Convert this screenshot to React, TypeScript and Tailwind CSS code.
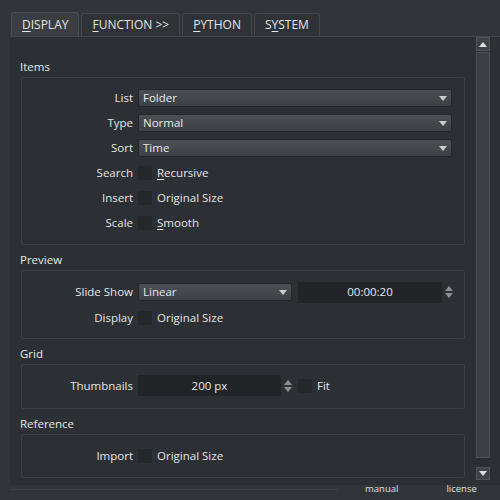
import React from 'react';

const font = { fontFamily: '"Open Sans", "Noto Sans", sans-serif' };

const Tab = ({ mn, rest, pre = '', active = false }: { mn: string; rest: string; pre?: string; active?: boolean }) => (
  <div
    className={`px-[10px] flex items-center rounded-t-[3px] border border-b-0 text-[12px] text-[#e4e4e4] ${
      active ? 'bg-[#3a3e43] border-[#4a4e53] h-[24px]' : 'bg-[#2f3338] border-[#43474c] h-[23px]'
    }`}
  >
    {pre}
    <span className="underline underline-offset-2">{mn}</span>
    {rest}
  </div>
);

const Arrow = ({ up = false, color = '#c9cbcd' }: { up?: boolean; color?: string }) => (
  <svg width="8" height="5" viewBox="0 0 8 5">
    <path d={up ? 'M0 5 L4 0 L8 5 Z' : 'M0 0 L8 0 L4 5 Z'} fill={color} />
  </svg>
);

const Combo = ({ value, w }: { value: string; w: string }) => (
  <div className={`${w} h-[18px] rounded-[2px] border border-[#25282b] bg-gradient-to-b from-[#4b4f54] to-[#3d4146] flex items-center justify-between pl-[4px] pr-[4px] text-[#e8e8e8]`}>
    <span>{value}</span>
    <Arrow />
  </div>
);

const Check = () => <div className="w-[14px] h-[14px] bg-[#25282b]" />;

const Spin = ({ value, w }: { value: string; w: string }) => (
  <div className="flex items-center">
    <div className={`${w} h-[21px] bg-[#222528] flex items-center justify-center text-[#e8e8e8]`}>{value}</div>
    <div className="flex flex-col gap-[2px] ml-[3px]">
      <Arrow up color="#8d9094" />
      <Arrow color="#8d9094" />
    </div>
  </div>
);

const Row = ({ label, children, h = 'h-[18px]' }: { label: string; children: React.ReactNode; h?: string }) => (
  <div className={`flex items-center ${h}`}>
    <div className="w-[116px] text-right pr-[5px] text-[#e4e4e4]">{label}</div>
    {children}
  </div>
);

const CheckRow = ({ label, mn, rest }: { label: string; mn?: string; rest: string }) => (
  <Row label={label}>
    <div className="flex items-center gap-[5px] text-[#e4e4e4]">
      <Check />
      <span>
        {mn && <span className="underline underline-offset-2">{mn}</span>}
        {rest}
      </span>
    </div>
  </Row>
);

const Group = ({ title, children, cls }: { title: string; children: React.ReactNode; cls: string }) => (
  <div className="flex flex-col">
    <div className="h-[18px] leading-[18px] pl-[10px] text-[#e6e6e6]">{title}</div>
    <div className={`ml-[11px] mt-[1px] border border-[#3b3f44] rounded-[2px] flex flex-col ${cls}`}>{children}</div>
  </div>
);

export default function App() {
  return (
    <div className="w-[500px] h-[500px] bg-[#31353a] text-[11.5px] flex flex-col overflow-hidden" style={font}>
      <div className="flex items-end gap-[2px] pl-[11px] pt-[12px]">
        <Tab mn="D" rest="ISPLAY" active />
        <Tab mn="F" rest="UNCTION >>" />
        <Tab mn="P" rest="YTHON" />
        <Tab pre="S" mn="Y" rest="STEM" />
      </div>
      <div className="ml-[10px] h-[449px] bg-[#2c3034] border-t border-[#44484d] flex">
        <div className="flex-1 pt-[21px] pr-[11px] flex flex-col gap-[6px]">
          <Group title="Items" cls="pt-[11px] pb-[12px] gap-[7px]">
            <Row label="List"><Combo value="Folder" w="w-[314px]" /></Row>
            <Row label="Type"><Combo value="Normal" w="w-[314px]" /></Row>
            <Row label="Sort"><Combo value="Time" w="w-[314px]" /></Row>
            <CheckRow label="Search" mn="R" rest="ecursive" />
            <CheckRow label="Insert" rest="Original Size" />
            <CheckRow label="Scale" mn="S" rest="mooth" />
          </Group>
          <Group title="Preview" cls="pt-[11px] pb-[10px] gap-[6px]">
            <Row label="Slide Show" h="h-[20px]">
              <Combo value="Linear" w="w-[154px]" />
              <div className="ml-[6px]"><Spin value="00:00:20" w="w-[144px]" /></div>
            </Row>
            <div className="h-[20px] flex items-center">
              <CheckRow label="Display" rest="Original Size" />
            </div>
          </Group>
          <Group title="Grid" cls="pt-[10px] pb-[12px]">
            <Row label="Thumbnails" h="h-[21px]">
              <Spin value="200 px" w="w-[143px]" />
              <div className="ml-[6px] flex items-center gap-[5px] text-[#e4e4e4]">
                <Check />
                <span>Fit</span>
              </div>
            </Row>
          </Group>
          <Group title="Reference" cls="pt-[11px] pb-[11px]">
            <div className="h-[20px] flex items-center">
              <CheckRow label="Import" rest="Original Size" />
            </div>
          </Group>
        </div>
        <div className="w-[14px] mr-[10px] flex flex-col">
          <div className="h-[14px] bg-[#3e4247] border border-[#50545a] flex items-center justify-center">
            <Arrow up color="#e0e0e0" />
          </div>
          <div className="mt-[1px] h-[406px] bg-[#3c4045] border border-[#4c5055]" />
          <div className="h-[9px] bg-[#2a2d31]" />
          <div className="h-[13px] bg-[#3e4247] border border-[#50545a] flex items-center justify-center">
            <Arrow color="#e0e0e0" />
          </div>
        </div>
      </div>
      <div className="flex items-center h-[8px]">
        <div className="ml-[10px] w-[328px] h-[1px] bg-[#3d4146]" />
        <span className="ml-[27px] text-[9.5px] text-[#e0e0e0]">manual</span>
        <span className="ml-[48px] text-[9.5px] text-[#e0e0e0]">license</span>
      </div>
    </div>
  );
}
